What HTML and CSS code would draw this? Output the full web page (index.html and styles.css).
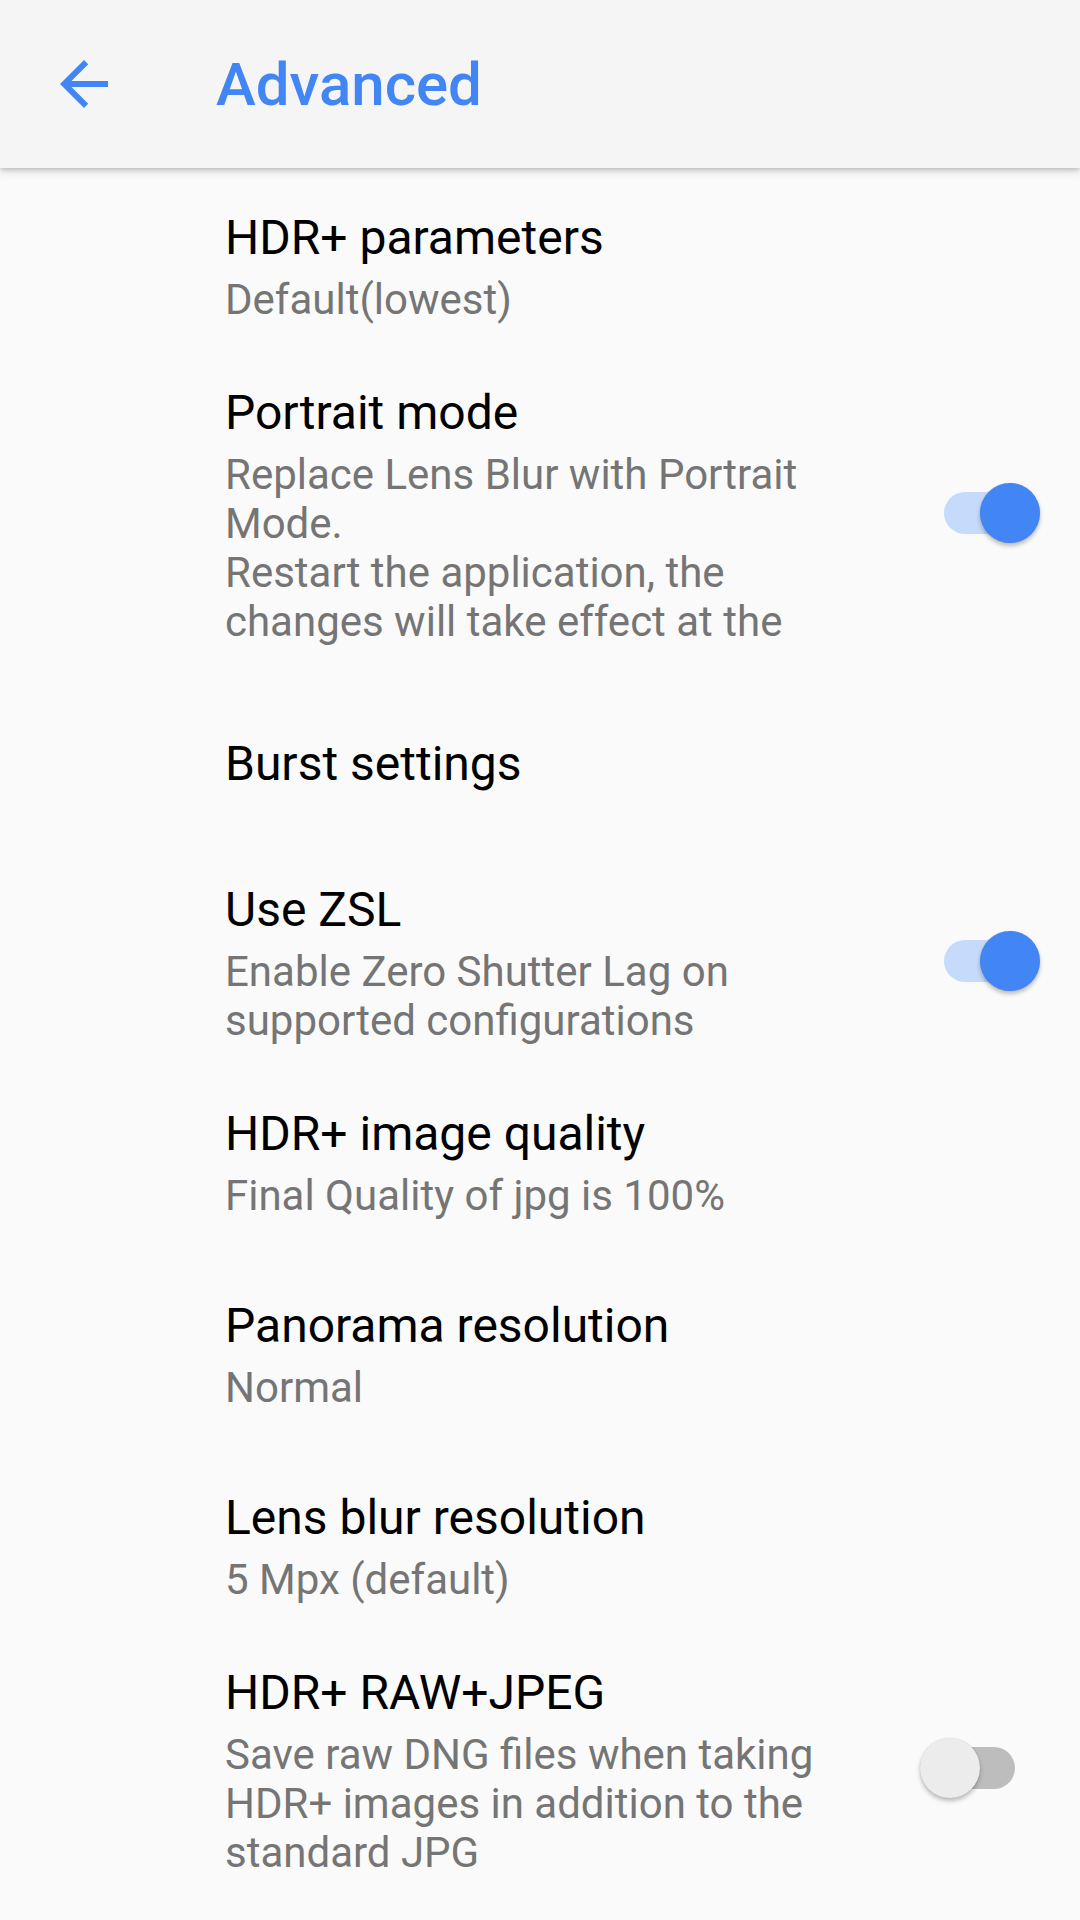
FILE: index.html
```html
<!DOCTYPE html>
<html lang="en">
  <head>
    <meta charset="UTF-8" />
    <meta name="viewport" content="width=device-width, initial-scale=1.0" />
    <title>Advanced</title>
    <link rel="stylesheet" href="styles.css">
  </head>
  <body>
    <header class="toolbar">
      <button class="nav-btn" aria-label="Back">
        <svg viewBox="0 0 24 24" width="72" height="72">
          <path d="M20 11H7.83l5.59-5.59L12 4l-8 8 8 8 1.41-1.41L7.83 13H20v-2z" fill="#4285f4" />
        </svg>
      </button>
      <h1 class="toolbar-title">Advanced</h1>
    </header>

    <ul class="prefs">
      <li class="pref">
        <div class="pref-text">
          <div class="pref-title">HDR+ parameters</div>
          <div class="pref-summary">Default(lowest)</div>
        </div>
      </li>
      <li class="pref">
        <div class="pref-text">
          <div class="pref-title">Portrait mode</div>
          <div class="pref-summary clamp">Replace Lens Blur with Portrait Mode.<br />Restart the application, the changes will take effect at the next launch.</div>
        </div>
        <div class="switch on"><span class="track"></span><span class="thumb"></span></div>
      </li>
      <li class="pref">
        <div class="pref-text">
          <div class="pref-title">Burst settings</div>
        </div>
      </li>
      <li class="pref">
        <div class="pref-text">
          <div class="pref-title">Use ZSL</div>
          <div class="pref-summary">Enable Zero Shutter Lag on supported configurations</div>
        </div>
        <div class="switch on"><span class="track"></span><span class="thumb"></span></div>
      </li>
      <li class="pref">
        <div class="pref-text">
          <div class="pref-title">HDR+ image quality</div>
          <div class="pref-summary">Final Quality of jpg is 100%</div>
        </div>
      </li>
      <li class="pref">
        <div class="pref-text">
          <div class="pref-title">Panorama resolution</div>
          <div class="pref-summary">Normal</div>
        </div>
      </li>
      <li class="pref">
        <div class="pref-text">
          <div class="pref-title">Lens blur resolution</div>
          <div class="pref-summary">5 Mpx (default)</div>
        </div>
      </li>
      <li class="pref">
        <div class="pref-text">
          <div class="pref-title">HDR+ RAW+JPEG</div>
          <div class="pref-summary">Save raw DNG files when taking HDR+ images in addition to the standard JPG</div>
        </div>
        <div class="switch"><span class="track"></span><span class="thumb"></span></div>
      </li>
    </ul>
  </body>
</html>
```

FILE: styles.css
```css
body {
  margin: 0;
  background-color: #fafafa;
  font-family: Roboto, "Noto Sans", sans-serif;
}
.toolbar {
  position: relative;
  z-index: 1;
  display: flex;
  align-items: center;
  height: 168px;
  padding-left: 48px;
  background-color: #f5f5f5;
  box-shadow: 0 2px 4px rgba(0, 0, 0, 0.18), 0 4px 10px rgba(0, 0, 0, 0.1);
}
.nav-btn {
  display: flex;
  width: 72px;
  height: 72px;
  padding: 0;
  border: none;
  background: none;
}
.toolbar-title {
  margin: 0 0 0 96px;
  font-size: 60px;
  font-weight: 500;
  color: #4285f4;
}
.prefs {
  list-style: none;
  margin: 0;
  padding: 0;
}
.pref {
  display: flex;
  align-items: center;
  min-height: 192px;
  padding: 25px 40px 19px 225px;
  box-sizing: border-box;
}
.pref-text {
  flex: none;
  width: 620px;
}
.pref-title {
  font-size: 48px;
  line-height: 56px;
  color: #000;
}
.pref-summary {
  margin-top: 9px;
  font-size: 42px;
  line-height: 49px;
  color: #757575;
}
.pref-summary.clamp {
  max-height: 196px;
  overflow: hidden;
}
.switch {
  position: relative;
  flex: none;
  width: 120px;
  height: 60px;
  margin-left: auto;
  margin-bottom: 6px;
}
.switch .track {
  position: absolute;
  top: 9px;
  left: 5px;
  width: 90px;
  height: 42px;
  border-radius: 21px;
  background-color: #bdbdbd;
}
.switch .thumb {
  position: absolute;
  top: 0;
  left: 0;
  width: 60px;
  height: 60px;
  border-radius: 50%;
  background-color: #ececec;
  box-shadow: 0 3px 4px rgba(0, 0, 0, 0.25), 0 0 1px rgba(0, 0, 0, 0.15);
}
.switch.on .track {
  left: 24px;
  background-color: #c6dafb;
}
.switch.on .thumb {
  left: 60px;
  background-color: #4285f4;
}
```
